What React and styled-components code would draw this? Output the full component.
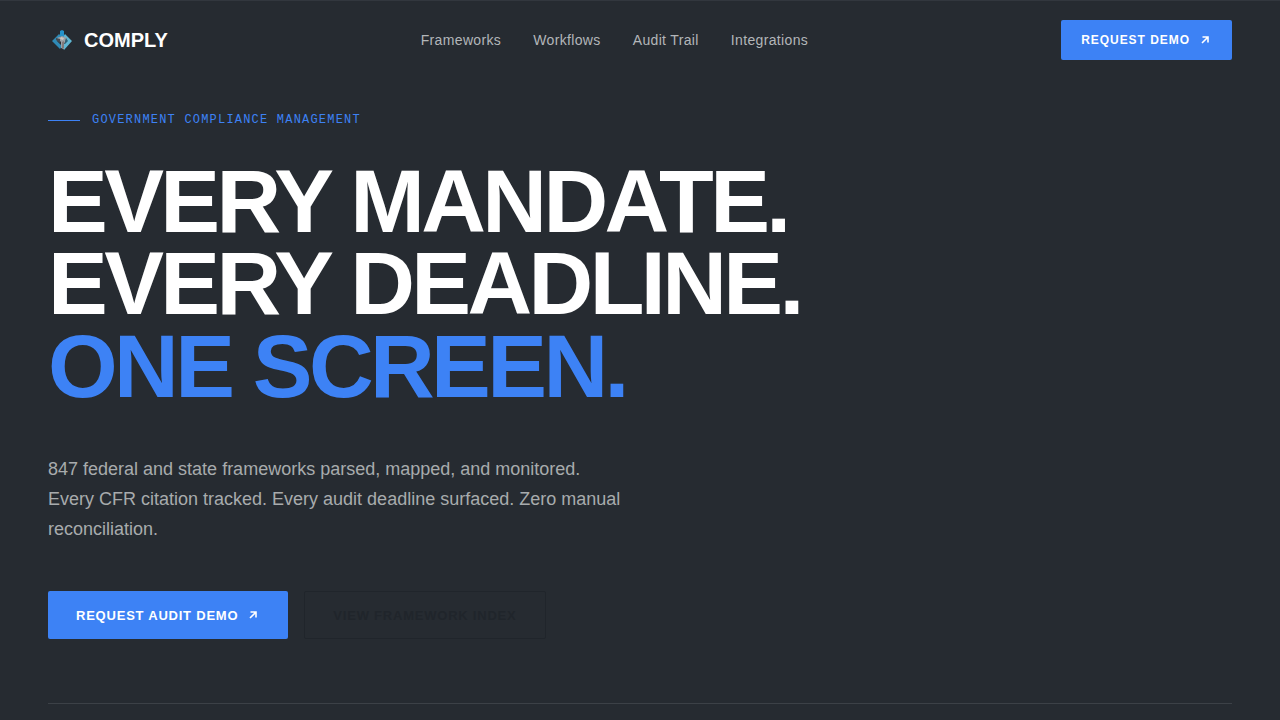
import React from "react";
import styled, { createGlobalStyle } from "styled-components";

const GlobalStyle = createGlobalStyle`
  *, *::before, *::after { box-sizing: border-box; }
  body {
    margin: 0;
    background: #262b31;
    color: #ffffff;
    font-family: "Liberation Sans", Arial, sans-serif;
  }
`;

const Page = styled.div`
  min-height: 100vh;
  border-top: 1px solid #32373e;
  overflow-x: hidden;
`;

const Header = styled.header`
  display: flex;
  align-items: center;
  justify-content: space-between;
  padding: 19px 48px 20px;
`;

const Brand = styled.a`
  display: flex;
  align-items: center;
  gap: 8px;
  color: #ffffff;
  font-size: 20px;
  font-weight: 700;
  line-height: 28px;
  text-decoration: none;
`;

const Nav = styled.nav`
  display: flex;
  gap: 32px;
`;

const NavLink = styled.a`
  color: #b3b6b9;
  font-size: 14px;
  line-height: 20px;
  letter-spacing: 0.025em;
  text-decoration: none;
`;

const Button = styled.button`
  display: inline-flex;
  align-items: center;
  gap: 8px;
  height: ${(p) => (p.$large ? "48px" : "40px")};
  padding: 0 ${(p) => (p.$large ? "28px" : "20px")};
  border: ${(p) => (p.$ghost ? "1px solid #20252b" : "0")};
  border-radius: 2px;
  background: ${(p) => (p.$ghost ? "transparent" : "#3d82f5")};
  color: ${(p) => (p.$ghost ? "#20252b" : "#ffffff")};
  font-family: inherit;
  font-size: ${(p) => (p.$large ? "13px" : "12px")};
  font-weight: 700;
  letter-spacing: ${(p) => (p.$large ? "0.06em" : "0.08em")};
  white-space: nowrap;
  cursor: pointer;
`;

const Hero = styled.main`
  padding: 32px 48px 0;
`;

const Eyebrow = styled.p`
  display: flex;
  align-items: center;
  gap: 12px;
  margin: 0 0 32px;
  color: #3d82f5;
  font-family: "Liberation Mono", monospace;
  font-size: 12px;
  line-height: 16px;
  letter-spacing: 0.1em;

  &::before {
    content: "";
    width: 32px;
    height: 1px;
    background: #3d82f5;
  }
`;

const Headline = styled.h1`
  margin: 0 0 48px;
  font-size: clamp(48px, 7vw, 112px);
  font-weight: 700;
  line-height: 0.92;
  letter-spacing: -0.04em;
`;

const Line = styled.span`
  display: block;
  color: ${(p) => (p.$accent ? "#3d82f5" : "#ffffff")};
`;

const Lead = styled.p`
  max-width: 580px;
  margin: 0 0 47px;
  color: #a8abad;
  font-size: 18px;
  line-height: 1.65;
`;

const Actions = styled.div`
  display: flex;
  flex-wrap: wrap;
  gap: 16px;
  padding-bottom: 64px;
  border-bottom: 1px solid #3c4147;
`;

const Logo = () => (
  <svg width="28" height="28" viewBox="0 0 28 28" aria-hidden="true">
    <path d="M11 8 4 15l8 8 2-3-5-5 4-5z" fill="#2f8ab6" />
    <path d="m17 8 7 7-8 9-2-4 5-5-4-4z" fill="#5fb6d3" />
    <path d="m12 5 2-1 2 1v5l-2 2-2-2z" fill="#2593ca" />
    <path d="m9 12 5-2 5 2-1 4-2 1v6l-3-1v-6z" fill="#9aa1a6" />
    <path d="m8 12 4 1v4l-4-3z" fill="#444b52" />
    <path d="m13 11 3 1-1 2-3-1z" fill="#cfc6bf" />
    <path d="m14 16 2-1v7l-2 1z" fill="#80787a" />
    <path d="m18 12 2 3-3 3v-3z" fill="#2f6074" />
  </svg>
);

const Arrow = () => (
  <svg width="14" height="14" viewBox="0 0 14 14" fill="none" stroke="currentColor" strokeWidth="1.6" aria-hidden="true">
    <path d="M4 10 10 4M4.5 4H10v5.5" />
  </svg>
);

const links = ["Frameworks", "Workflows", "Audit Trail", "Integrations"];

export default function App() {
  return (
    <Page>
      <GlobalStyle />
      <Header>
        <Brand href="#"><Logo />COMPLY</Brand>
        <Nav aria-label="Main">
          {links.map((label) => <NavLink href="#" key={label}>{label}</NavLink>)}
        </Nav>
        <Button type="button">REQUEST DEMO<Arrow /></Button>
      </Header>
      <Hero>
        <Eyebrow>GOVERNMENT COMPLIANCE MANAGEMENT</Eyebrow>
        <Headline>
          <Line>EVERY MANDATE.</Line>
          <Line>EVERY DEADLINE.</Line>
          <Line $accent>ONE SCREEN.</Line>
        </Headline>
        <Lead>
          847 federal and state frameworks parsed, mapped, and monitored. Every CFR citation tracked. Every audit deadline surfaced. Zero manual reconciliation.
        </Lead>
        <Actions>
          <Button type="button" $large>REQUEST AUDIT DEMO<Arrow /></Button>
          <Button type="button" $large $ghost>VIEW FRAMEWORK INDEX</Button>
        </Actions>
      </Hero>
    </Page>
  );
}
